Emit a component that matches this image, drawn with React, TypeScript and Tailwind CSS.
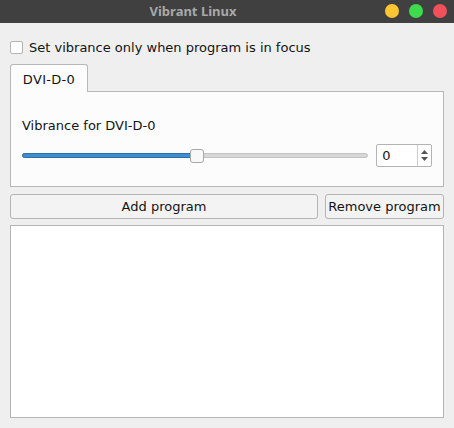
import React from "react";

export default function App() {
  const font = { fontFamily: '"DejaVu Sans", "Noto Sans", sans-serif' };
  return (
    <div className="w-[454px] h-[428px] bg-[#efefef] flex flex-col text-[13px] text-[#141414]" style={font}>
      {/* title bar */}
      <div className="h-[23px] bg-[#404040] relative flex items-center">
        <div className="w-[386px] text-center font-bold text-[13px] text-[#a8a8a8] leading-none" style={{ fontFamily: '"Noto Sans", sans-serif' }}>Vibrant Linux</div>
        <div className="absolute right-[7px] top-[4px] flex gap-[10px]">
          <div className="w-[14px] h-[14px] rounded-full bg-[#fbc632]" />
          <div className="w-[14px] h-[14px] rounded-full bg-[#3ddc4d]" />
          <div className="w-[14px] h-[14px] rounded-full bg-[#f2505a]" />
        </div>
      </div>

      <div className="px-[10px] flex flex-col">
        {/* checkbox row */}
        <div className="mt-[16px] h-[16px] flex items-center gap-[6px]">
          <div className="w-[13px] h-[13px] bg-white border border-[#b4b4b4] rounded-[2px]" />
          <span className="leading-none">Set vibrance only when program is in focus</span>
        </div>

        {/* tab */}
        <div className="mt-[9px] flex">
          <div className="w-[78px] h-[28px] bg-[#fcfcfc] border border-[#b8b8b8] border-b-0 rounded-t-[3px] flex items-center justify-center relative z-10 -mb-px pt-px">
            <span className="leading-none tracking-[0.3px]">DVI-D-0</span>
          </div>
        </div>
        {/* pane */}
        <div className="h-[96px] bg-[#fcfcfc] border border-[#b8b8b8] flex flex-col px-[11px]">
          <div className="mt-[25px] leading-none h-[16px] flex items-center">Vibrance for DVI-D-0</div>
          <div className="mt-[11px] flex items-center gap-[8px]">
            <div className="relative w-[347px] h-[22px] flex items-center">
              <div className="w-full h-[5px] rounded-full bg-[#d7d7d7] border border-[#c2c2c2]" />
              <div className="absolute left-0 w-[172px] h-[5px] rounded-full bg-[#3d8ed0] border border-[#2f6fa5]" />
              <div className="absolute left-[168px] top-[4px] w-[14px] h-[14px] rounded-[3px] bg-[#f8f8f8] border border-[#a8a8a8]" />
            </div>
            <div className="w-[56px] h-[23px] bg-white border border-[#b4b4b4] rounded-[2px] flex items-center">
              <span className="pl-[5px] flex-1 leading-none">0</span>
              <div className="w-[14px] h-full border-l border-[#d0d0d0] flex flex-col items-center justify-center gap-[3px]">
                <svg width="7" height="4" viewBox="0 0 7 4"><path d="M0 4 L3.5 0 L7 4 Z" fill="#555" /></svg>
                <svg width="7" height="4" viewBox="0 0 7 4"><path d="M0 0 L3.5 4 L7 0 Z" fill="#555" /></svg>
              </div>
            </div>
          </div>
        </div>

        {/* buttons */}
        <div className="mt-[7px] flex gap-[7px] h-[25px]">
          <button className="w-[308px] h-full bg-[#f3f3f3] border border-[#b4b4b4] rounded-[3px] leading-none">Add program</button>
          <button className="flex-1 h-full bg-[#f3f3f3] border border-[#b4b4b4] rounded-[3px] leading-none">Remove program</button>
        </div>

        {/* list */}
        <div className="mt-[6px] h-[193px] bg-white border border-[#b4b4b4]" />
      </div>
    </div>
  );
}
